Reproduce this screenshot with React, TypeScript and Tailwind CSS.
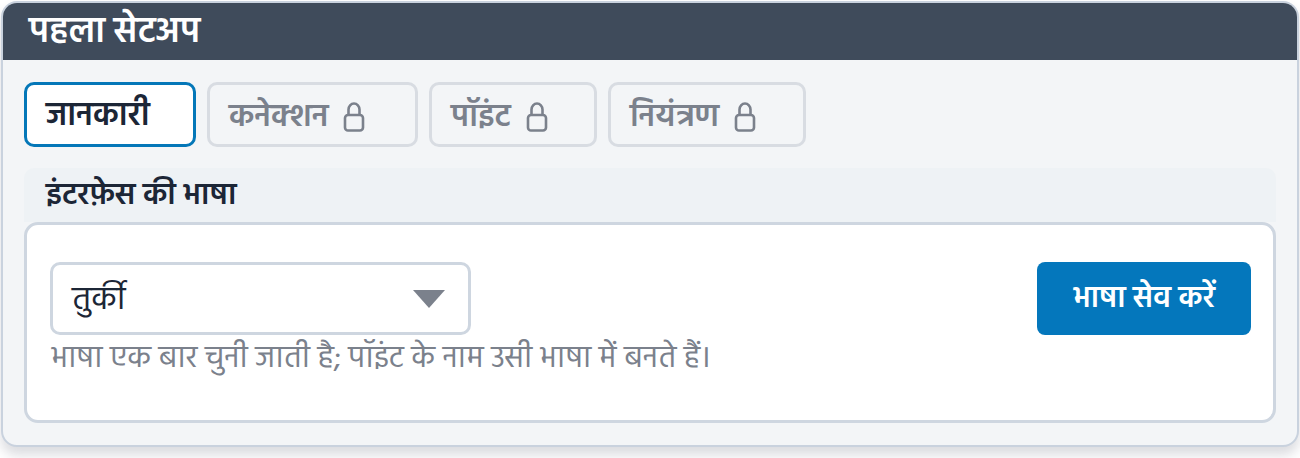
function Lock() {
  return (
    <svg width="22" height="30" viewBox="0 0 22 30" fill="none" stroke="#7b818c" strokeWidth="2.6" className="ml-[15px] mt-[-2px] shrink-0">
      <rect x="2" y="13" width="18" height="15.5" rx="3" />
      <path d="M5.5 13V7.5a5.5 6 0 0 1 11 0V13" />
    </svg>
  );
}

function LockedTab({ label, width }: { label: string; width: string }) {
  return (
    <div className={`flex h-[65px] items-center rounded-[10px] border-[3px] border-[#d8dce2] pl-[19px] pt-[6px] text-[32px] font-semibold text-[#7b818c] ${width}`}>
      <span>{label}</span>
      <Lock />
    </div>
  );
}

export default function App() {
  return (
    <div className="h-[458px] w-[1300px] overflow-hidden bg-white font-['Hind',sans-serif]">
      <div className="ml-px mt-px h-[446px] w-[1298px] overflow-hidden rounded-[16px] border-2 border-[#c9d2de] bg-[#f3f5f7] shadow-[0_8px_12px_rgba(30,40,60,0.16)]">
        <div className="flex h-[57px] items-center bg-[#3f4b5b] pl-[26px] pt-[2px] text-[35.6px] font-semibold text-white">पहला सेटअप</div>
        <div className="flex flex-col pl-[21px] pr-[21px] pt-[22px]">
          <div className="flex gap-[11px]">
            <div className="flex h-[65px] w-[172px] items-center rounded-[10px] border-[3px] border-[#0477b8] bg-white pl-[19px] pt-[6px] text-[32.5px] font-semibold text-[#1c2636]">जानकारी</div>
            <LockedTab label="कनेक्शन" width="w-[211px]" />
            <LockedTab label="पॉइंट" width="w-[168px]" />
            <LockedTab label="नियंत्रण" width="w-[198px]" />
          </div>
          <div className="mt-[21px] flex h-[54px] items-center rounded-t-[10px] bg-[#eef2f5] pl-[22px] pt-[5px] text-[30.7px] font-semibold text-[#1c2636]">इंटरफ़ेस की भाषा</div>
          <div className="flex h-[201px] items-start justify-between rounded-[14px] border-[3px] border-[#ced6e0] bg-white pl-[23px] pr-[22px] pt-[37px]">
            <div>
              <div className="flex h-[73px] w-[421px] items-center justify-between rounded-[10px] border-[3px] border-[#ced6e0] pl-[19px] pr-[23px] text-[33px] text-[#1c2636]">
                <span className="mt-[4px]">तुर्की</span>
                <svg width="32" height="18" viewBox="0 0 32 18" fill="#7b818c"><path d="M0 0h32L16 18z" /></svg>
              </div>
              <p className="pl-[1px] pt-[2px] text-[30.9px] leading-[44px] text-[#7b818c]">भाषा एक बार चुनी जाती है; पॉइंट के नाम उसी भाषा में बनते हैं।</p>
            </div>
            <div className="flex h-[73px] w-[214px] items-center justify-center rounded-[8px] bg-[#0477bc] pt-[2px] text-[30.3px] font-semibold text-white">भाषा सेव करें</div>
          </div>
        </div>
      </div>
    </div>
  );
}
